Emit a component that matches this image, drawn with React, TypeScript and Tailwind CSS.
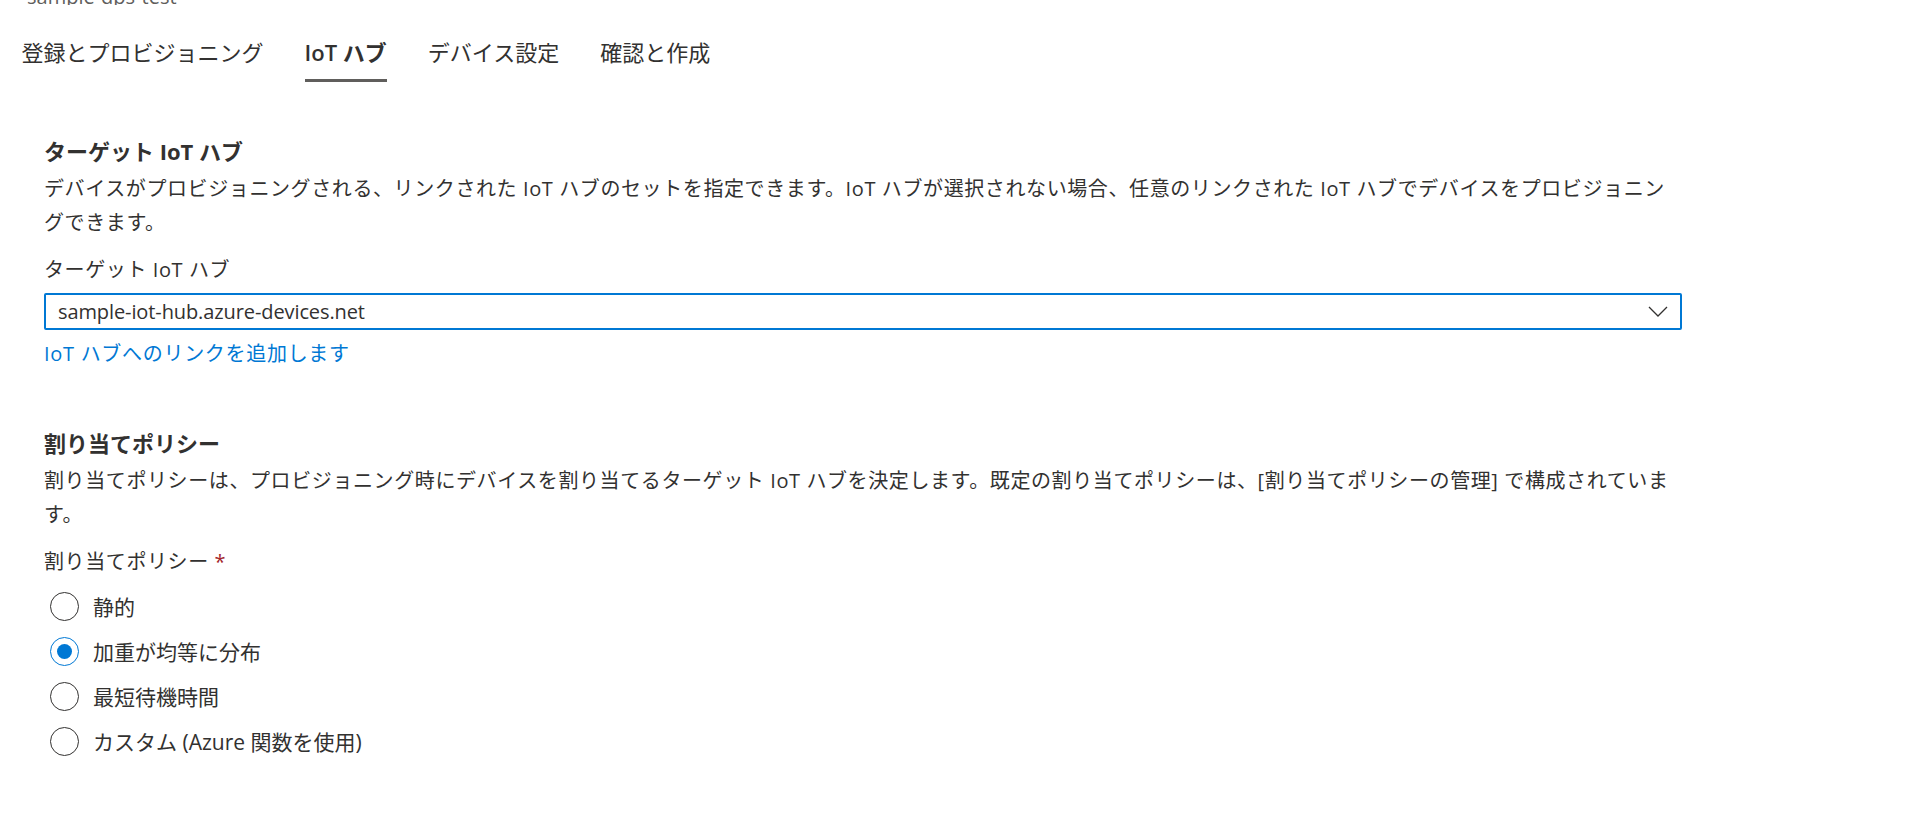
import { useState } from "react";

const tabs = ["登録とプロビジョニング", "IoT ハブ", "デバイス設定", "確認と作成"];

const policies = ["静的", "加重が均等に分布", "最短待機時間", "カスタム (Azure 関数を使用)"];

function Radio({ label, checked, onSelect }: { label: string; checked: boolean; onSelect: () => void }) {
  return (
    <button type="button" onClick={onSelect} className="flex h-[45px] items-center gap-[14px] pl-[6px] text-left">
      <span
        className={
          checked
            ? "flex h-[29px] w-[29px] items-center justify-center rounded-full border border-[#0078d4]"
            : "flex h-[29px] w-[29px] items-center justify-center rounded-full border border-[#323130]"
        }
      >
        {checked && <span className="h-[15px] w-[15px] rounded-full bg-[#0078d4]" />}
      </span>
      <span className="text-[21px] leading-[30px] text-[#323130]">{label}</span>
    </button>
  );
}

export default function App() {
  const [active, setActive] = useState(1);
  const [policy, setPolicy] = useState(1);

  return (
    <div
      className="h-[832px] w-full overflow-hidden bg-white text-[#323130]"
      style={{ fontFamily: '"Open Sans", "Noto Sans CJK JP", sans-serif' }}
    >
      {/* page title, scrolled mostly out of view */}
      <div className="h-[5px] overflow-hidden pl-[27px]">
        <div className="-mt-[15px] text-[20px] leading-[24px] text-[#605e5c]">sample-dps-test</div>
      </div>

      <nav className="mt-[32px] flex pl-[1px]">
        {tabs.map((tab, i) => (
          <button key={tab} type="button" onClick={() => setActive(i)} className="flex flex-col px-[20.5px]">
            <span className={i === active ? "text-[22px] font-semibold leading-[30px]" : "text-[22px] leading-[30px]"}>
              {tab}
            </span>
            <span className={i === active ? "mt-3 h-[3px] w-full bg-[#605e5c]" : "mt-3 h-[3px] w-full"} />
          </button>
        ))}
      </nav>

      <main className="ml-[44px] w-[1638px]">
        <section className="mt-[54px]">
          <h2 className="text-[22px] font-bold leading-[30px]">ターゲット IoT ハブ</h2>
          <p className="mt-[6px] text-[20px] leading-[34px] tracking-[0.6px]">
            デバイスがプロビジョニングされる、リンクされた IoT ハブのセットを指定できます。IoT ハブが選択されない場合、任意のリンクされた IoT ハブでデバイスをプロビジョニングできます。
          </p>
          <div className="mt-[15px] text-[20px] leading-[30px] tracking-[0.6px]">ターゲット IoT ハブ</div>
          <div className="mt-[8px] flex h-[37px] items-center justify-between rounded-[2px] border-2 border-[#0078d4] pl-[12px] pr-[12px]">
            <span className="text-[20px] leading-[30px] tracking-[-0.1px]">sample-iot-hub.azure-devices.net</span>
            <svg width="20" height="11" viewBox="0 0 20 11" fill="none">
              <polyline points="1,1 10,10 19,1" stroke="#323130" strokeWidth="1.3" />
            </svg>
          </div>
          <a href="#" className="mt-[9px] block text-[20px] leading-[30px] tracking-[0.7px] text-[#0078d4]">
            IoT ハブへのリンクを追加します
          </a>
        </section>

        <section className="mt-[59px]">
          <h2 className="text-[22px] font-bold leading-[30px]">割り当てポリシー</h2>
          <p className="mt-[6px] text-[20px] leading-[34px] tracking-[0.6px]">
            割り当てポリシーは、プロビジョニング時にデバイスを割り当てるターゲット IoT ハブを決定します。既定の割り当てポリシーは、[割り当てポリシーの管理] で構成されています。
          </p>
          <div className="mt-[15px] text-[20px] leading-[30px] tracking-[0.6px]">
            割り当てポリシー <span className="text-[#a4262c]">*</span>
          </div>
          <div className="mt-[7px] flex flex-col">
            {policies.map((p, i) => (
              <Radio key={p} label={p} checked={policy === i} onSelect={() => setPolicy(i)} />
            ))}
          </div>
        </section>
      </main>
    </div>
  );
}
